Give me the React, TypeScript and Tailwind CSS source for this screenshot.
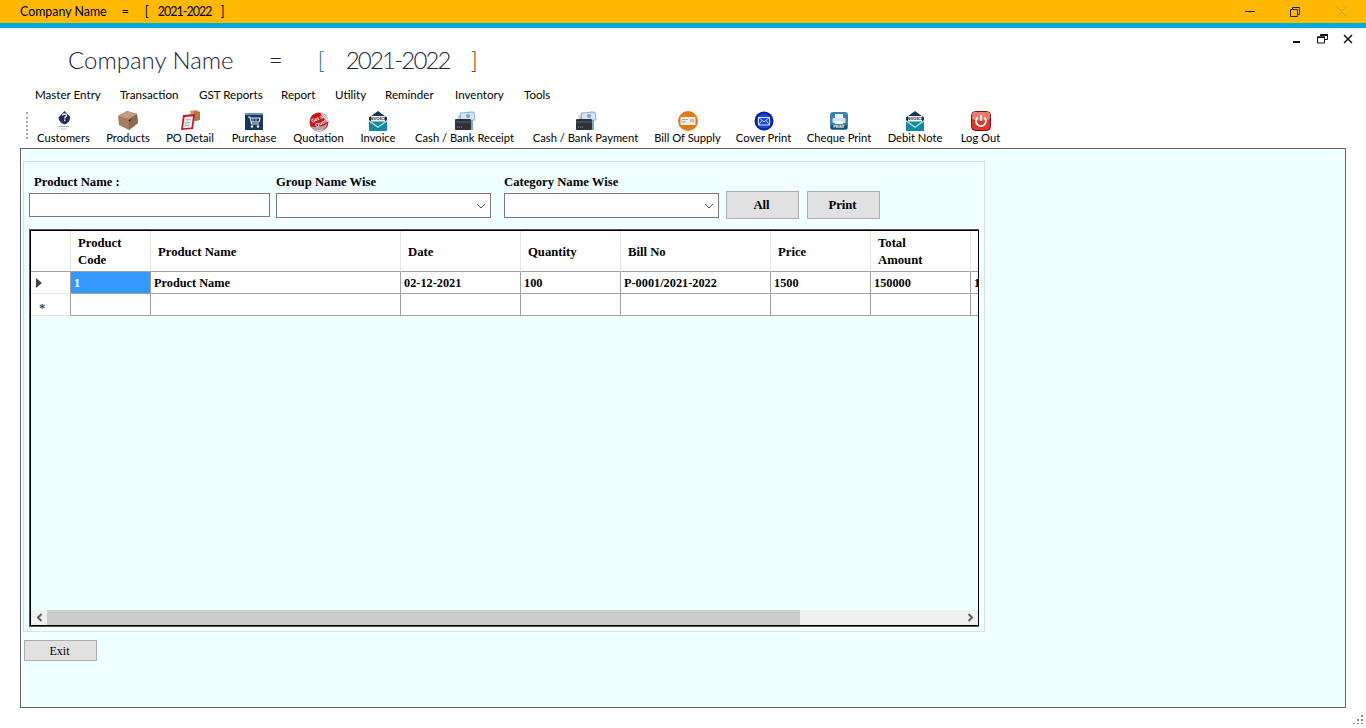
import { ReactNode } from 'react'

const uiFont = "font-['Lato',sans-serif]"
const serifFont = "font-['Liberation_Serif',serif]"

function CustomersIcon() {
  return (
    <svg width="22" height="22" viewBox="0 0 22 22">
      <path d="M11.500 1l5.500 5.500c.6 3-1 6-5 8-4-1-6.500-4-6.500-7z" fill="#252a66" />
      <path d="M9.500 5.500c.3-2 4-2 4 0 0 1.400-1.800 1.300-1.800 3" fill="none" stroke="#fff" strokeWidth="1.300" />
      <rect x="11" y="9.500" width="1.400" height="1.400" fill="#fff" />
      <rect x="6" y="16" width="10" height="1" fill="#a9abc0" />
      <rect x="8" y="18.500" width="6" height="1" fill="#c0c2d0" />
    </svg>
  )
}

function ProductsIcon() {
  return (
    <svg width="22" height="22" viewBox="0 0 22 22">
      <path d="M10 1l10 3 1 9-9 7-10-5-1-9z" fill="#a87a60" />
      <path d="M1 6l9-5 10 3-8 5z" fill="#c29a80" />
      <path d="M12 9l8-5 1 9-9 7z" fill="#8f674f" />
      <path d="M11 10.500l3.500-1.500-1.500 2.500z" fill="#2a1a10" />
    </svg>
  )
}

function PoDetailIcon() {
  return (
    <svg width="22" height="22" viewBox="0 0 22 22">
      <path d="M11 1l6-1 4 2v8l-8 2z" fill="#c79a5f" />
      <path d="M15 1l6 1v8l-6 1z" fill="#a87c46" />
      <path d="M4 5l12-1-2 15-12 1z" fill="#c8161c" />
      <path d="M5.500 7l8.500-.8-1.500 11.300-8.500.7z" fill="#f1eeee" />
      <path d="M6.500 10l5-.4M6 13l5-.4M6 15.500l4-.3" stroke="#888" strokeWidth=".8" />
    </svg>
  )
}

function PurchaseIcon() {
  return (
    <svg width="22" height="22" viewBox="0 0 22 22">
      <rect x="2" y="3" width="18" height="17" fill="#16355f" />
      <rect x="2" y="3" width="18" height="2" fill="#6d8fb5" />
      <path d="M5 7h2l1.500 7h7.500M8 8h9l-1 4H8.500" fill="none" stroke="#dfe9f5" strokeWidth="1.200" />
      <path d="M10 8v4M13 8v4" stroke="#dfe9f5" strokeWidth=".8" />
      <circle cx="9" cy="16.500" r="1.200" fill="#fff" />
      <circle cx="15" cy="16.500" r="1.200" fill="#fff" />
    </svg>
  )
}

function QuotationIcon() {
  return (
    <svg width="22" height="22" viewBox="0 0 22 22">
      <circle cx="11" cy="12" r="9.500" fill="#c5141d" />
      <path d="M12.500 3c3.500.5 7 3.500 8 8-3.500-.5-6.500-4-8-8z" fill="#d4d4d4" />
      <path d="M2.500 16.500c5 1 12 .5 17-3-1.500 4.500-4.500 8-8.500 8-3.500 0-7-2-8.500-5z" fill="#a8a8a8" />
      <path d="M5 19c3 2 8 1.500 11-1-1.500 2.500-3.500 3.500-5 3.500-2 0-4.500-1-6-2.500z" fill="#cfcfcf" />
      <text x="4" y="10" fontSize="5" fontWeight="700" fill="#fff" transform="rotate(-25 11 11)">Get a</text>
      <text x="6" y="15.500" fontSize="5" fontWeight="700" fill="#fff" transform="rotate(-25 11 11)">Quote</text>
    </svg>
  )
}

function EnvelopeIcon() {
  return (
    <svg width="22" height="22" viewBox="0 0 22 22">
      <path d="M11 1l9 6.500V21H2V7.500z" fill="#173a52" />
      <rect x="2" y="11" width="18" height="10" fill="#128aa6" />
      <path d="M2 10l9 6.500L20 10v1.500l-9 6.500-9-6.500z" fill="#bfe3ea" />
      <rect x="4" y="6" width="14" height="5.500" fill="#f2f2f2" />
      <text x="11" y="10.200" fontSize="4.300" fontWeight="700" textAnchor="middle" fill="#222" fontFamily="Liberation Sans">INVOICE</text>
    </svg>
  )
}

function WalletIcon() {
  return (
    <svg width="22" height="22" viewBox="0 0 22 22">
      <path d="M3 6l14-5 3 7-14 5z" fill="#b9d3ee" />
      <path d="M6 3l14-1 1 8-14 1z" fill="#d4e4f4" stroke="#6d9ccc" strokeWidth=".7" />
      <circle cx="14" cy="6" r="2" fill="#7ba6d4" />
      <rect x="1" y="9" width="16" height="11" rx="1" fill="#2d3238" />
      <path d="M1 12h16" stroke="#5a6068" />
      <path d="M3 17h6" stroke="#8c9198" strokeDasharray="1 1" />
      <path d="M18 10v10" stroke="#7ba6d4" strokeWidth="2" />
    </svg>
  )
}

function BillIcon() {
  return (
    <svg width="22" height="22" viewBox="0 0 22 22">
      <circle cx="11" cy="11" r="10" fill="#e37a1b" />
      <rect x="3.500" y="7" width="15" height="8" rx=".5" fill="#f4ede4" />
      <path d="M5 9.500h6M5 12h4" stroke="#a9a9a9" />
      <rect x="13" y="9" width="4" height="3" fill="#e0b98c" />
    </svg>
  )
}

function CoverIcon() {
  return (
    <svg width="22" height="22" viewBox="0 0 22 22">
      <circle cx="11" cy="11" r="9.500" fill="#0a1fa8" />
      <circle cx="11" cy="11" r="7.500" fill="#1d45d8" />
      <rect x="5.500" y="7.500" width="11" height="7.500" fill="none" stroke="#cfe0ff" strokeWidth="1" />
      <path d="M5.500 7.500L11 12l5.500-4.500M5.500 15L9 10.500M16.500 15L13 10.500" fill="none" stroke="#cfe0ff" strokeWidth=".9" />
    </svg>
  )
}

function ChequeIcon() {
  return (
    <svg width="22" height="22" viewBox="0 0 22 22">
      <rect x="2" y="2" width="18" height="18" rx="3" fill="#3a84b5" />
      <rect x="7" y="4" width="8" height="4" fill="#eef5f9" />
      <rect x="4.500" y="8" width="13" height="5" rx="1" fill="#d3e4ee" />
      <rect x="7" y="11" width="8" height="3" fill="#fff" />
      <rect x="3" y="15" width="16" height="4" fill="#134d70" />
      <text x="11" y="18.300" fontSize="3.800" fontWeight="700" textAnchor="middle" fill="#fff" fontFamily="Liberation Sans">PRINT</text>
    </svg>
  )
}

function LogOutIcon() {
  return (
    <svg width="22" height="22" viewBox="0 0 22 22">
      <rect x="1.500" y="1.500" width="19" height="19" rx="4" fill="#e0352a" stroke="#7d1410" />
      <path d="M2 4c0-1 1-2 2-2h14c1 0 2 1 2 2v5c-5 2-13 2-18 0z" fill="#ee7a6e" />
      <path d="M7.500 7.500a5 5 0 1 0 7 0" fill="none" stroke="#fff" strokeWidth="1.800" />
      <path d="M11 5v6" stroke="#fff" strokeWidth="1.800" />
    </svg>
  )
}

const menuItems = [
  { label: 'Master Entry', width: 'w-[85px]' },
  { label: 'Transaction', width: 'w-[79px]' },
  { label: 'GST Reports', width: 'w-[82px]' },
  { label: 'Report', width: 'w-[54px]' },
  { label: 'Utility', width: 'w-[50px]' },
  { label: 'Reminder', width: 'w-[70px]' },
  { label: 'Inventory', width: 'w-[69px]' },
  { label: 'Tools', width: 'w-[40px]' },
]

const toolItems: { label: string; width: string; icon: ReactNode }[] = [
  { label: 'Customers', width: 'w-[69px]', icon: <CustomersIcon /> },
  { label: 'Products', width: 'w-[60px]', icon: <ProductsIcon /> },
  { label: 'PO Detail', width: 'w-[64px]', icon: <PoDetailIcon /> },
  { label: 'Purchase', width: 'w-[64px]', icon: <PurchaseIcon /> },
  { label: 'Quotation', width: 'w-[65px]', icon: <QuotationIcon /> },
  { label: 'Invoice', width: 'w-[54px]', icon: <EnvelopeIcon /> },
  { label: 'Cash / Bank Receipt', width: 'w-[119px]', icon: <WalletIcon /> },
  { label: 'Cash / Bank Payment', width: 'w-[123px]', icon: <WalletIcon /> },
  { label: 'Bill Of Supply', width: 'w-[81px]', icon: <BillIcon /> },
  { label: 'Cover Print', width: 'w-[71px]', icon: <CoverIcon /> },
  { label: 'Cheque Print', width: 'w-[80px]', icon: <ChequeIcon /> },
  { label: 'Debit Note', width: 'w-[72px]', icon: <EnvelopeIcon /> },
  { label: 'Log Out', width: 'w-[59px]', icon: <LogOutIcon /> },
]

const columns = [
  { head: ['Product', 'Code'], width: 'w-[80px]', value: '1' },
  { head: ['Product Name'], width: 'w-[250px]', value: 'Product Name' },
  { head: ['Date'], width: 'w-[120px]', value: '02-12-2021' },
  { head: ['Quantity'], width: 'w-[100px]', value: '100' },
  { head: ['Bill No'], width: 'w-[150px]', value: 'P-0001/2021-2022' },
  { head: ['Price'], width: 'w-[100px]', value: '1500' },
  { head: ['Total', 'Amount'], width: 'w-[100px]', value: '150000' },
  { head: [''], width: 'w-[8px]', value: '1' },
]

function ComboBox({ width }: { width: string }) {
  return (
    <div className={`${width} flex h-[25px] items-center justify-end border border-[#7a7a7a] bg-white pr-[4px]`}>
      <svg width="10" height="6" viewBox="0 0 10 6">
        <path d="M1 1l4 4 4-4" fill="none" stroke="#555" strokeWidth="1" />
      </svg>
    </div>
  )
}

function GridView() {
  return (
    <div className="mt-[11px] h-[398px] w-[950px] border-t border-b border-l border-[#555]">
      <div className="flex h-full flex-col overflow-hidden border border-black">
        <div className="flex h-[41px] shrink-0 bg-white text-[12.7px] font-bold">
          <div className="w-[40px] shrink-0 border-r border-b border-r-[#e4e4e4] border-b-[#a0a0a0]" />
          {columns.map((col, i) => (
            <div
              key={i}
              className={`${col.width} flex shrink-0 flex-col justify-center border-r border-b border-r-[#e4e4e4] border-b-[#a0a0a0] pl-[7px] leading-[17px] ${col.head.length === 1 ? 'pt-[3px]' : 'pt-[1px]'}`}
            >
              {col.head.map((line) => (
                <span key={line}>{line}</span>
              ))}
            </div>
          ))}
        </div>
        <div className="flex h-[22px] shrink-0 bg-white text-[12.3px] font-bold">
          <div className="flex w-[40px] shrink-0 items-center border-r border-b border-r-[#a0a0a0] border-b-[#e4e4e4] pl-[5px]">
            <svg width="6" height="10" viewBox="0 0 6 10">
              <path d="M0 0l6 5-6 5z" fill="#444" />
            </svg>
          </div>
          {columns.map((col, i) => (
            <div
              key={i}
              className={`${col.width} flex shrink-0 items-center overflow-hidden border-r border-b border-[#a0a0a0] pl-[3px] pt-[2px] ${i === 0 ? 'bg-[#3399ff] text-white' : ''}`}
            >
              {col.value}
            </div>
          ))}
        </div>
        <div className="flex h-[22px] shrink-0 bg-white">
          <div className="flex w-[40px] shrink-0 items-center border-r border-b border-r-[#a0a0a0] border-b-[#e4e4e4] pl-[8px] text-[#444]">
            <span className="mt-[8px] font-bold">*</span>
          </div>
          {columns.map((col, i) => (
            <div key={i} className={`${col.width} shrink-0 border-r border-b border-[#a0a0a0]`} />
          ))}
        </div>
        <div className="flex-1" />
        <div className="flex h-[15px] w-full shrink-0 bg-[#f0f0f0]">
          <div className="flex w-[16px] shrink-0 items-center justify-center">
            <svg width="7" height="9" viewBox="0 0 7 9">
              <path d="M5.500 1L2 4.500 5.500 8" fill="none" stroke="#606060" strokeWidth="2" />
            </svg>
          </div>
          <div className="w-[753px] shrink-0 bg-[#cdcdcd]" />
          <div className="flex-1" />
          <div className="flex w-[16px] shrink-0 items-center justify-center">
            <svg width="7" height="9" viewBox="0 0 7 9">
              <path d="M1.500 1L5 4.500 1.500 8" fill="none" stroke="#606060" strokeWidth="2" />
            </svg>
          </div>
        </div>
      </div>
    </div>
  )
}

export default function App() {
  return (
    <div className={`${uiFont} flex h-[728px] w-[1366px] flex-col overflow-hidden bg-white text-black`}>
      <div className="flex h-[28px] shrink-0 items-start border-b-[5px] border-[#00acd8] bg-[#ffb900]">
        <div className="ml-[20px] flex h-[23px] items-center whitespace-nowrap pt-[2px] text-[12.4px]">
          <span>Company Name</span>
          <span className="ml-[15px]">=</span>
          <span className="ml-[16px]">[</span>
          <span className="ml-[9px] tracking-[-0.9px]">2021-2022</span>
          <span className="ml-[9px]">]</span>
        </div>
        <div className="ml-auto mr-[19px] flex h-[23px] items-center">
          <svg width="10" height="2" viewBox="0 0 10 2">
            <rect width="10" height="1" fill="#222" />
          </svg>
          <svg className="ml-[35px]" width="10" height="10" viewBox="0 0 10 10">
            <path d="M.5 2.500h7v7h-7zM2.500 2.500v-2h7v7h-2" fill="none" stroke="#222" />
          </svg>
          <svg className="ml-[36px]" width="11" height="11" viewBox="0 0 11 11">
            <path d="M.5.5l10 10M10.500.5l-10 10" stroke="#c9a233" />
          </svg>
        </div>
      </div>

      <div className="flex h-[56px] shrink-0">
        <div className="ml-[68px] flex items-center whitespace-nowrap pt-[8px] text-[24px] font-light text-[#1c2440]">
          <span>Company Name</span>
          <span className="ml-[35px]">=</span>
          <span className="ml-[35px] text-[#1f6fb5]">[</span>
          <span className="ml-[21px] tracking-[-1.8px]">2021-2022</span>
          <span className="ml-[21px] text-[#7a3410]">]</span>
        </div>
        <div className="ml-auto mr-[13px] mt-[6px] flex h-[10px] items-start">
          <svg className="mt-[7px]" width="7" height="3" viewBox="0 0 7 3">
            <rect width="7" height="2" fill="#111" />
          </svg>
          <svg className="ml-[17px]" width="11" height="10" viewBox="0 0 11 10">
            <path d="M3.500 2V.5h7v5H8M.5 3h7v6h-7z" fill="none" stroke="#111" />
            <rect x="3" y=".5" width="8" height="1.500" fill="#111" />
            <rect y="2.500" width="8" height="1.500" fill="#111" />
          </svg>
          <svg className="ml-[15px]" width="10" height="10" viewBox="0 0 10 10">
            <path d="M1 1l8 8M9 1l-8 8" stroke="#111" strokeWidth="1.500" />
          </svg>
        </div>
      </div>

      <div className="ml-[35px] flex h-[22px] shrink-0 items-center whitespace-nowrap text-[11.6px]">
        {menuItems.map((item) => (
          <span key={item.label} className={item.width}>
            {item.label}
          </span>
        ))}
      </div>

      <div className="ml-[26px] flex h-[42px] shrink-0">
        <div className="mt-[6px] h-[27px] w-[3px] border-l-2 border-dotted border-[#a8a8a8]" />
        {toolItems.map((item) => (
          <div key={item.label} className={`${item.width} flex flex-col items-center whitespace-nowrap pt-[4px]`}>
            <div className="h-[22px]">{item.icon}</div>
            <span className="text-[11.2px] leading-[12px]">{item.label}</span>
          </div>
        ))}
      </div>

      <div className={`${serifFont} ml-[20px] flex h-[560px] w-[1326px] shrink-0 flex-col border border-[#666] bg-[#f0ffff] pl-[2px] pt-[12px] text-[12.7px]`}>
        <div className="flex h-[471px] w-[962px] flex-col border border-[#d8e0e0] pl-[5px] font-bold">
          <div className="flex h-[56px] items-start pt-[12px]">
            <div className="flex w-[247px] flex-col">
              <span className="ml-[5px] h-[19px] leading-[17px]">Product Name :</span>
              <div className="h-[24px] w-[241px] border border-[#7a7a7a] bg-white" />
            </div>
            <div className="flex w-[228px] flex-col">
              <span className="h-[19px] leading-[17px]">Group Name Wise</span>
              <ComboBox width="w-[215px]" />
            </div>
            <div className="flex w-[222px] flex-col">
              <span className="h-[19px] leading-[17px]">Category Name Wise</span>
              <ComboBox width="w-[215px]" />
            </div>
            <button className="mt-[17px] h-[28px] w-[73px] border border-[#adadad] bg-[#e1e1e1] pt-[1px] pr-[2px] font-bold">All</button>
            <button className="ml-[8px] mt-[17px] h-[28px] w-[73px] border border-[#adadad] bg-[#e1e1e1] pt-[1px] pr-[2px] font-bold">Print</button>
          </div>
          <GridView />
        </div>
        <button className="ml-[1px] mt-[8px] h-[21px] w-[73px] border border-[#adadad] bg-[#e1e1e1] pt-[1px] pr-[2px] text-[12px]">Exit</button>
      </div>

      <div className="mr-[3px] mt-[6px] flex justify-end">
        <svg width="10" height="10" viewBox="0 0 10 10">
          <path d="M8 1h2v2H8zM4 5h2v2H4zM8 5h2v2H8zM0 9h2v2H0zM4 9h2v2H4zM8 9h2v2H8z" fill="#8a8a8a" />
        </svg>
      </div>
    </div>
  )
}
